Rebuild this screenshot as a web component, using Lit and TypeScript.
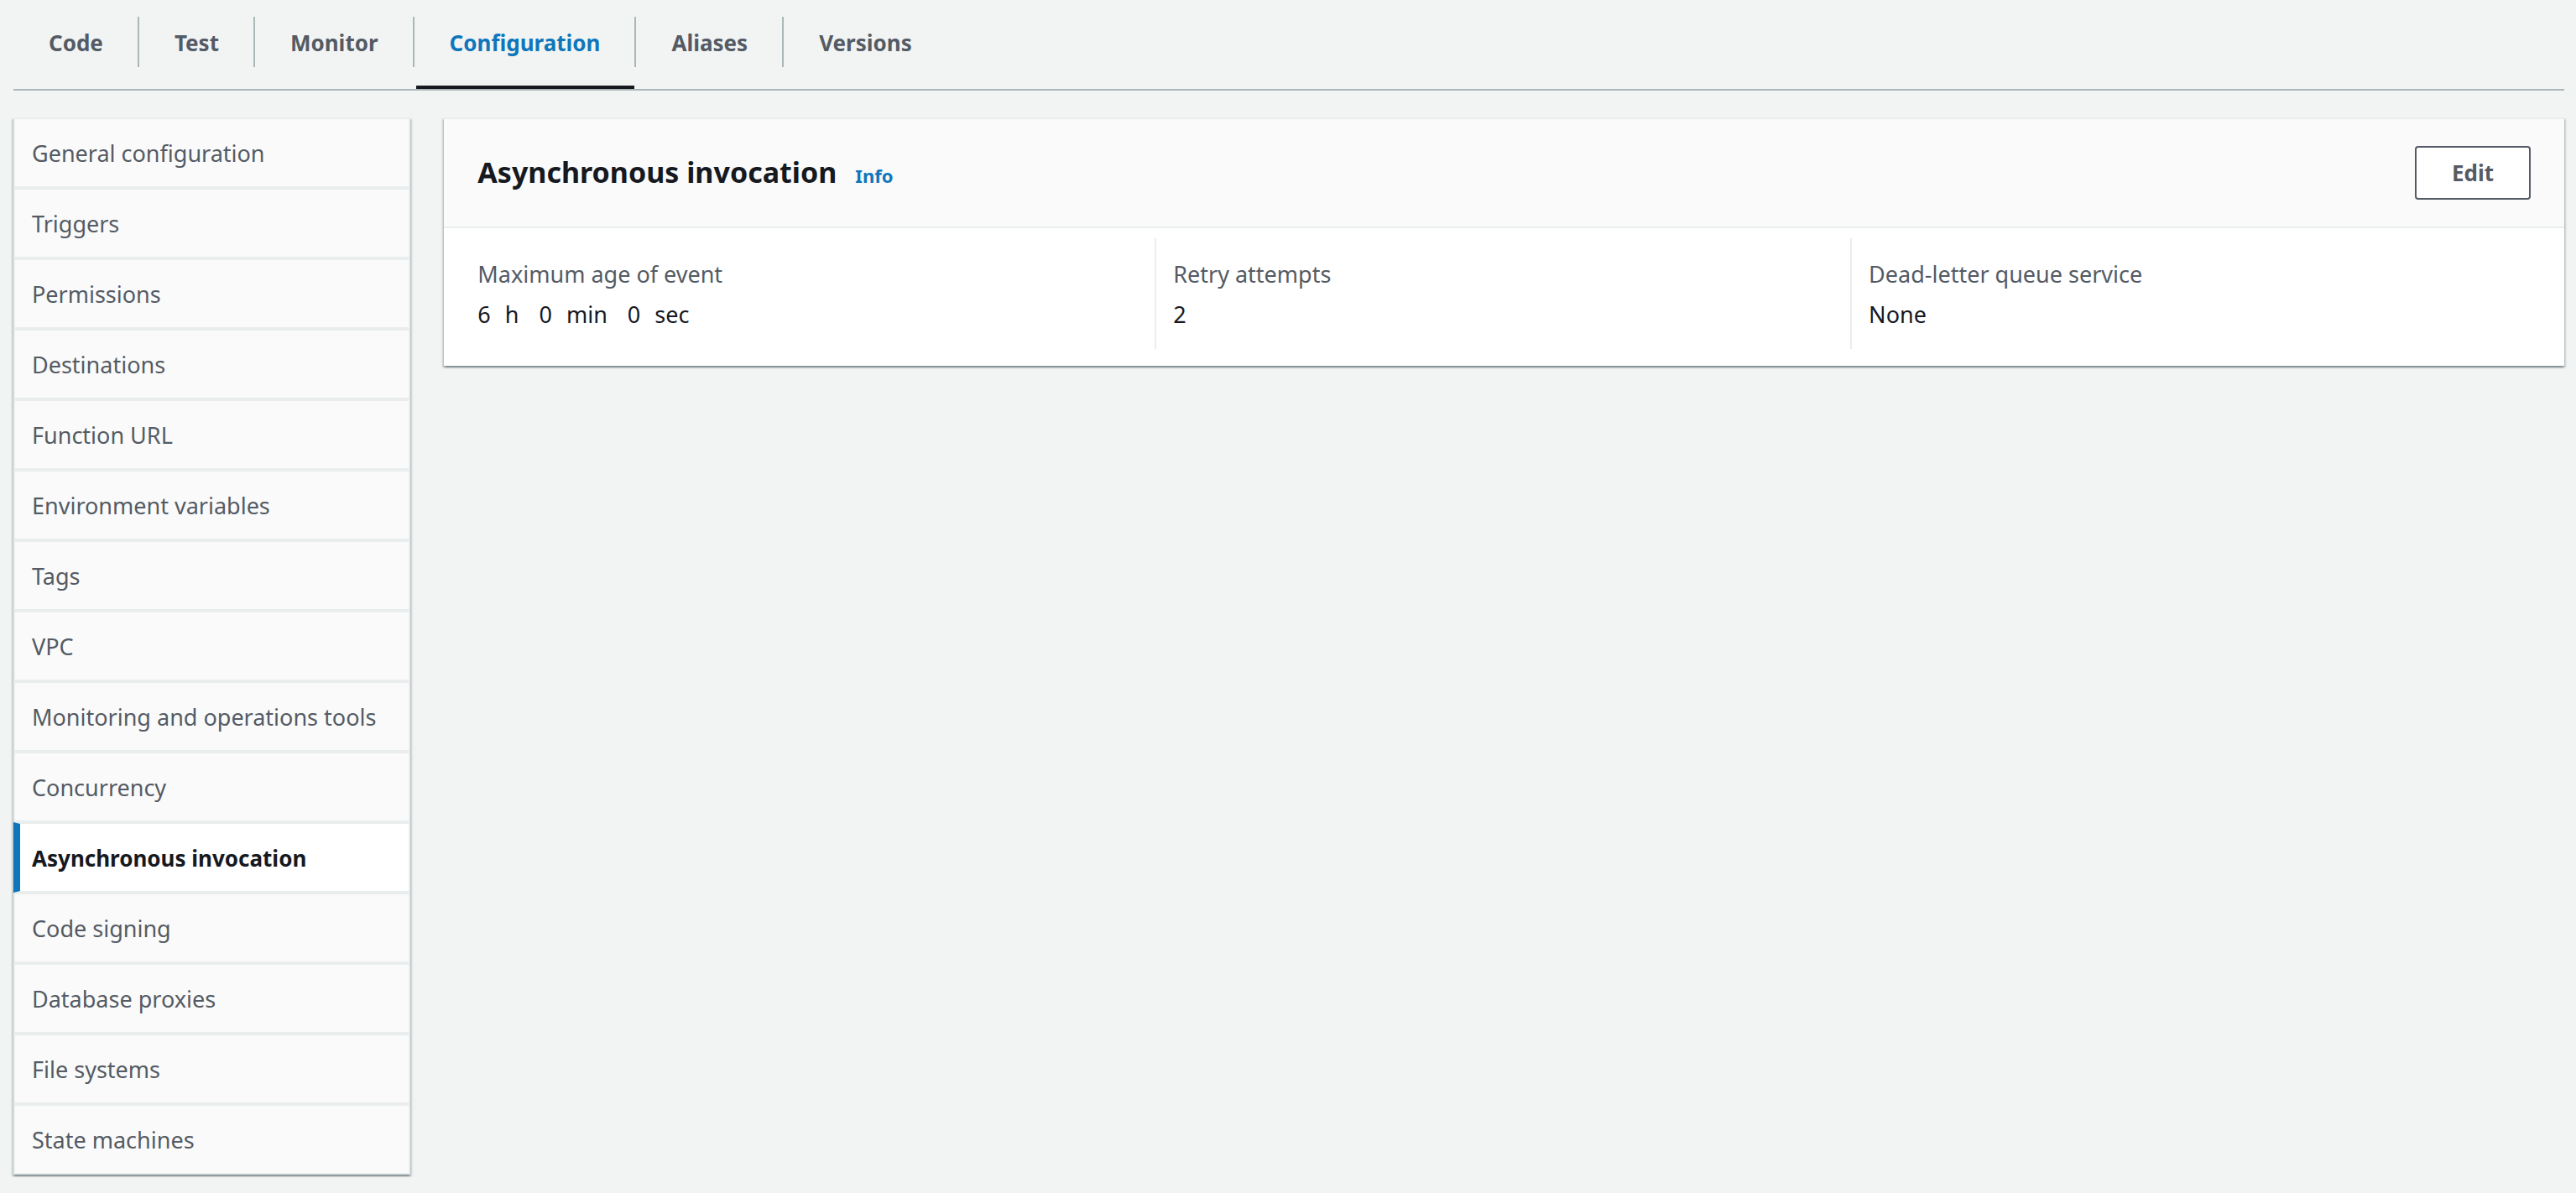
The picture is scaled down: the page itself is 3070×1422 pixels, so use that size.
import { LitElement, html, css } from "lit";
import { customElement, property, state } from "lit/decorators.js";
import { classMap } from "lit/directives/class-map.js";

const TABS = ["Code", "Test", "Monitor", "Configuration", "Aliases", "Versions"];

const SECTIONS = [
  "General configuration",
  "Triggers",
  "Permissions",
  "Destinations",
  "Function URL",
  "Environment variables",
  "Tags",
  "VPC",
  "Monitoring and operations tools",
  "Concurrency",
  "Asynchronous invocation",
  "Code signing",
  "Database proxies",
  "File systems",
  "State machines",
];

const slug = (name: string) => "#" + name.toLowerCase().replace(/ /g, "-");

@customElement("function-tabs")
export class FunctionTabs extends LitElement {
  @property() current = "";

  static styles = css`
    :host {
      display: block;
      border-bottom: 2px solid #aab7b8;
    }
    .tabs {
      display: flex;
      margin: 0;
      padding: 0;
      list-style: none;
    }
    .item {
      display: flex;
      padding-left: 2px;
    }
    .item:not(:last-child)::after {
      content: "";
      width: 2px;
      height: 60px;
      margin-top: 20px;
      background: #aab7b8;
    }
    .tab {
      padding: 0 41px 0 40px;
      border-bottom: 4px solid transparent;
      font-size: 26px;
      font-weight: 700;
      line-height: 102px;
      color: #545b64;
      text-decoration: none;
      white-space: nowrap;
    }
    .tab.current {
      color: #0f76bb;
      border-bottom-color: #16191f;
    }
  `;

  render() {
    return html`<nav aria-label="Function">
      <ul class="tabs">
        ${TABS.map((name) => {
          const current = name === this.current;
          return html`<li class="item">
            <a class=${classMap({ tab: true, current })} href=${slug(name)} aria-current=${current ? "page" : "false"}>${name}</a>
          </li>`;
        })}
      </ul>
    </nav>`;
  }
}

@customElement("section-nav")
export class SectionNav extends LitElement {
  @property() current = "";

  static styles = css`
    :host {
      display: block;
      box-shadow:
        0 2px 2px 0 rgba(0, 28, 36, 0.3),
        2px 2px 2px 0 rgba(0, 28, 36, 0.15),
        -2px 2px 2px 0 rgba(0, 28, 36, 0.15);
    }
    .list {
      margin: 0;
      padding: 0;
      list-style: none;
    }
    .link {
      display: block;
      padding: 19px 20px 17px;
      border: 2px solid #eaeded;
      background: #fafafa;
      font-size: 27px;
      line-height: 44px;
      color: #545b64;
      text-decoration: none;
    }
    .link.current {
      padding-left: 14px;
      border-left: 8px solid #0f76bb;
      background: #fff;
      font-size: 26px;
      font-weight: 700;
      color: #16191f;
    }
  `;

  render() {
    return html`<nav aria-label="Configuration sections">
      <ul class="list">
        ${SECTIONS.map((name) => {
          const current = name === this.current;
          return html`<li>
            <a class=${classMap({ link: true, current })} href=${slug(name)} aria-current=${current ? "page" : "false"}>${name}</a>
          </li>`;
        })}
      </ul>
    </nav>`;
  }
}

@customElement("async-panel")
export class AsyncPanel extends LitElement {
  static styles = css`
    :host {
      display: block;
      border-top: 2px solid #eaeded;
      background: #fff;
      box-shadow:
        0 2px 2px 0 rgba(0, 28, 36, 0.3),
        2px 2px 2px 0 rgba(0, 28, 36, 0.15),
        -2px 2px 2px 0 rgba(0, 28, 36, 0.15);
    }
    .header {
      display: flex;
      align-items: center;
      justify-content: space-between;
      padding: 32px 40px;
      border-bottom: 2px solid #eaeded;
      background: #fafafa;
    }
    .heading {
      display: flex;
      align-items: baseline;
      gap: 22px;
      padding-bottom: 2px;
    }
    .title {
      margin: 0;
      font-size: 34px;
      font-weight: 700;
      line-height: 44px;
      color: #16191f;
    }
    .info {
      font-size: 22px;
      font-weight: 700;
      color: #0f76bb;
      text-decoration: none;
    }
    .edit {
      padding: 8px 42px;
      border: 2px solid #545b64;
      border-radius: 4px;
      background: #fff;
      font: inherit;
      font-size: 26px;
      font-weight: 700;
      line-height: 44px;
      color: #545b64;
      cursor: pointer;
    }
    .details {
      display: grid;
      grid-template-columns: repeat(3, minmax(0, 1fr));
      margin: 0;
      padding: 12px 20px 20px;
      font-size: 27px;
      line-height: 44px;
    }
    .cell {
      padding: 21px 20px 19px;
    }
    .cell:not(:last-child) {
      border-right: 2px solid #eaeded;
    }
    .label {
      color: #545b64;
    }
    .value {
      display: flex;
      gap: 24px;
      margin: 4px 0 0;
      color: #16191f;
    }
    .part {
      display: flex;
      gap: 17px;
    }
  `;

  render() {
    const age: [number, string][] = [[6, "h"], [0, "min"], [0, "sec"]];
    return html`
      <header class="header">
        <div class="heading">
          <h2 class="title">Asynchronous invocation</h2>
          <a class="info" href="#info">Info</a>
        </div>
        <button class="edit" type="button">Edit</button>
      </header>
      <dl class="details">
        <div class="cell">
          <dt class="label">Maximum age of event</dt>
          <dd class="value">
            ${age.map(([amount, unit]) => html`<span class="part"><span>${amount}</span><span>${unit}</span></span>`)}
          </dd>
        </div>
        <div class="cell">
          <dt class="label">Retry attempts</dt>
          <dd class="value">2</dd>
        </div>
        <div class="cell">
          <dt class="label">Dead-letter queue service</dt>
          <dd class="value">None</dd>
        </div>
      </dl>
    `;
  }
}

@customElement("app-root")
export class AppRoot extends LitElement {
  @state() tab = "Configuration";
  @state() section = "Asynchronous invocation";

  static styles = css`
    :host {
      display: block;
      box-sizing: border-box;
      min-height: 100vh;
      padding: 0 14px 20px 16px;
      background: #f2f4f4;
      font-family: "Noto Sans", "Open Sans", sans-serif;
    }
    .content {
      display: grid;
      grid-template-columns: repeat(12, minmax(0, 1fr));
      gap: 40px;
      align-items: start;
      padding-top: 32px;
    }
    .side {
      grid-column: span 2;
    }
    .main {
      grid-column: span 10;
    }
  `;

  render() {
    return html`
      <function-tabs .current=${this.tab}></function-tabs>
      <div class="content">
        <section-nav class="side" .current=${this.section}></section-nav>
        <async-panel class="main"></async-panel>
      </div>
    `;
  }
}
